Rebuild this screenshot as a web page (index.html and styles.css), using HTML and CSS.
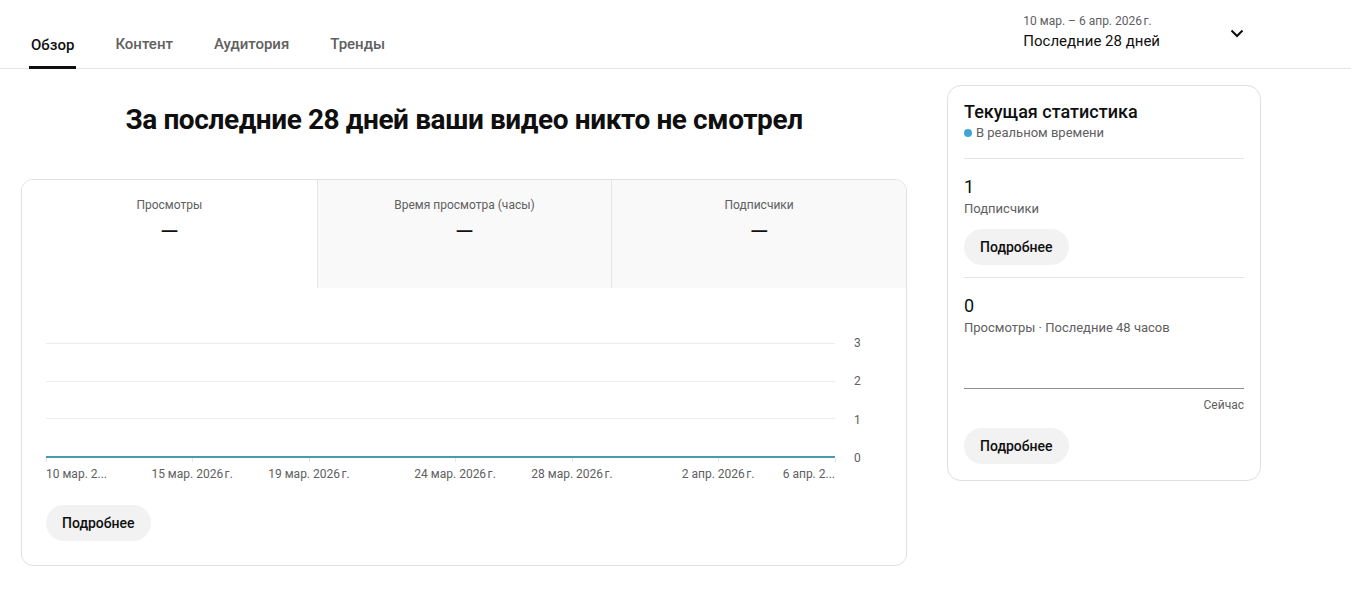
FILE: index.html
```html
<!DOCTYPE html>
<html lang="ru">
<head>
<meta charset="utf-8">
<link rel="stylesheet" href="styles.css">
</head>
<body>
<header class="topbar">
  <nav class="tabs">
    <a class="tab active">Обзор</a>
    <a class="tab">Контент</a>
    <a class="tab">Аудитория</a>
    <a class="tab">Тренды</a>
  </nav>
  <div class="range">
    <div class="range-text">
      <div class="range-dates">10 мар. – 6 апр. 2026&#8239;г.</div>
      <div class="range-label">Последние 28 дней</div>
    </div>
    <svg class="chev" width="24" height="24" viewBox="0 0 24 24"><path d="M6.5 9.5 12 15l5.5-5.5" fill="none" stroke="#0f0f0f" stroke-width="2"/></svg>
  </div>
</header>

<main class="main">
  <section class="left">
    <h1 class="headline">За последние 28 дней ваши видео никто не смотрел</h1>
    <div class="card chart-card">
      <div class="metrics">
        <div class="metric active"><div class="m-label">Просмотры</div><div class="m-value">—</div></div>
        <div class="metric"><div class="m-label">Время просмотра (часы)</div><div class="m-value">—</div></div>
        <div class="metric"><div class="m-label">Подписчики</div><div class="m-value">—</div></div>
      </div>
      <div class="chart">
        <div class="plot-row">
          <div class="plot">
            <div class="grid"></div>
            <div class="grid"></div>
            <div class="grid"></div>
            <div class="grid base"></div>
            <span class="tick" style="left:0%"></span>
            <span class="tick" style="left:18.52%"></span>
            <span class="tick" style="left:33.33%"></span>
            <span class="tick" style="left:51.85%"></span>
            <span class="tick" style="left:66.67%"></span>
            <span class="tick" style="left:85.19%"></span>
            <span class="tick" style="left:100%"></span>
          </div>
          <div class="yaxis">
            <span>3</span><span>2</span><span>1</span><span>0</span>
          </div>
        </div>
        <div class="xaxis">
          <span class="xl first">10 мар. 2...</span>
          <span class="xl" style="left:18.52%">15 мар. 2026&#8239;г.</span>
          <span class="xl" style="left:33.33%">19 мар. 2026&#8239;г.</span>
          <span class="xl" style="left:51.85%">24 мар. 2026&#8239;г.</span>
          <span class="xl" style="left:66.67%">28 мар. 2026&#8239;г.</span>
          <span class="xl" style="left:85.19%">2 апр. 2026&#8239;г.</span>
          <span class="xl last">6 апр. 2...</span>
        </div>
        <button class="btn">Подробнее</button>
      </div>
    </div>
  </section>

  <aside class="card live">
    <div class="live-title">Текущая статистика</div>
    <div class="live-sub"><span class="dot"></span>В реальном времени</div>
    <div class="sep"></div>
    <div class="stat-num">1</div>
    <div class="stat-label">Подписчики</div>
    <button class="btn">Подробнее</button>
    <div class="sep sep-after-btn"></div>
    <div class="stat-num">0</div>
    <div class="stat-label">Просмотры · Последние 48 часов</div>
    <div class="mini-line"></div>
    <div class="now">Сейчас</div>
    <button class="btn">Подробнее</button>
  </aside>
</main>
</body>
</html>
```

FILE: styles.css
```css
* { box-sizing: border-box; }
body {
  margin: 0;
  font-family: Roboto, "Noto Sans", Arial, sans-serif;
  color: #0f0f0f;
  background: #fff;
}
.topbar {
  height: 69px;
  border-bottom: 1px solid #e5e5e5;
  display: flex;
  justify-content: space-between;
  margin-right: 8px;
}
.tabs {
  display: flex;
  gap: 37px;
  padding-left: 29px;
  align-items: flex-end;
}
.tab {
  font-size: 15px;
  font-weight: 500;
  color: #606060;
  padding: 0 2px 12px;
  border-bottom: 3px solid transparent;
  line-height: 18px;
  cursor: pointer;
}
.tab.active {
  color: #0f0f0f;
  border-bottom-color: #0f0f0f;
  margin-bottom: -1px;
}
.range {
  display: flex;
  align-items: flex-start;
  gap: 65px;
  padding-top: 13px;
  padding-right: 102px;
}
.range-dates {
  font-size: 12px;
  color: #606060;
  line-height: 16px;
}
.range-label {
  font-size: 15px;
  line-height: 20px;
  margin-top: 2px;
}
.chev { margin-top: 8px; }

.main {
  display: flex;
  gap: 40px;
  padding: 16px 0 0 21px;
  align-items: flex-start;
}
.left { width: 886px; }
.headline {
  margin: 0;
  height: 94px;
  padding-top: 19px;
  text-align: center;
  font-size: 28px;
  font-weight: 700;
  line-height: 32px;
  letter-spacing: -0.4px;
}
.card {
  border: 1px solid #e0e0e0;
  border-radius: 12px;
  background: #fff;
}
.chart-card { overflow: hidden; }
.metrics {
  display: grid;
  grid-template-columns: 1fr 1fr 1fr;
  height: 108px;
}
.metric {
  background: #f9f9f9;
  border-left: 1px solid #e5e5e5;
  text-align: center;
  padding-top: 17px;
}
.metric.active { background: #fff; border-left: none; }
.m-label {
  font-size: 12px;
  color: #606060;
  line-height: 16px;
}
.m-value {
  font-size: 24px;
  line-height: 26px;
  margin-top: 6px;
}
.chart { padding: 55px 0 24px 24px; }
.plot-row { display: flex; }
.plot {
  position: relative;
  width: 789px;
  height: 115px;
  display: flex;
  flex-direction: column;
  justify-content: space-between;
}
.grid { height: 1px; background: #ededed; }
.grid.base { height: 2px; background: #4b99ad; }
.tick {
  position: absolute;
  top: 115px;
  width: 1px;
  height: 4px;
  background: #e5e5e5;
}
.yaxis {
  display: flex;
  flex-direction: column;
  justify-content: space-between;
  padding-left: 19px;
  margin-top: -7px;
  height: 129px;
  font-size: 12px;
  line-height: 14px;
  color: #606060;
}
.xaxis {
  position: relative;
  width: 789px;
  height: 16px;
  margin-top: 1px;
  font-size: 12px;
  line-height: 16px;
  color: #606060;
}
.xl {
  position: absolute;
  top: 0;
  transform: translateX(-50%);
  white-space: nowrap;
}
.xl.first { left: 0; transform: none; }
.xl.last { right: 0; transform: none; }
.btn {
  display: block;
  height: 36px;
  border: none;
  border-radius: 18px;
  background: #f2f2f2;
  padding: 0 16px;
  font-family: inherit;
  font-size: 14px;
  font-weight: 500;
  color: #0f0f0f;
}
.chart .btn { margin-top: 23px; }

.live {
  width: 314px;
  border-radius: 14px;
  padding: 15px 16px 16px 16px;
}
.live-title {
  font-size: 18px;
  font-weight: 500;
  line-height: 22px;
}
.live-sub {
  display: flex;
  align-items: center;
  gap: 4px;
  font-size: 13px;
  color: #606060;
  line-height: 18px;
  margin-top: 1px;
}
.dot {
  width: 8px;
  height: 8px;
  border-radius: 50%;
  background: #3ea6d5;
}
.sep {
  height: 1px;
  background: #e5e5e5;
  margin: 16px 0 18px;
}
.sep.sep-after-btn { margin-top: 12px; }
.stat-num {
  font-size: 18px;
  font-weight: 400;
  line-height: 20px;
}
.stat-label {
  font-size: 13px;
  color: #606060;
  line-height: 18px;
  margin-top: 3px;
}
.live .stat-label + .btn { margin-top: 11px; }
.mini-line {
  height: 1px;
  background: #909090;
  margin-top: 51px;
}
.now {
  text-align: right;
  font-size: 12px;
  color: #606060;
  line-height: 16px;
  margin-top: 8px;
}
.now + .btn { margin-top: 15px; }
```
